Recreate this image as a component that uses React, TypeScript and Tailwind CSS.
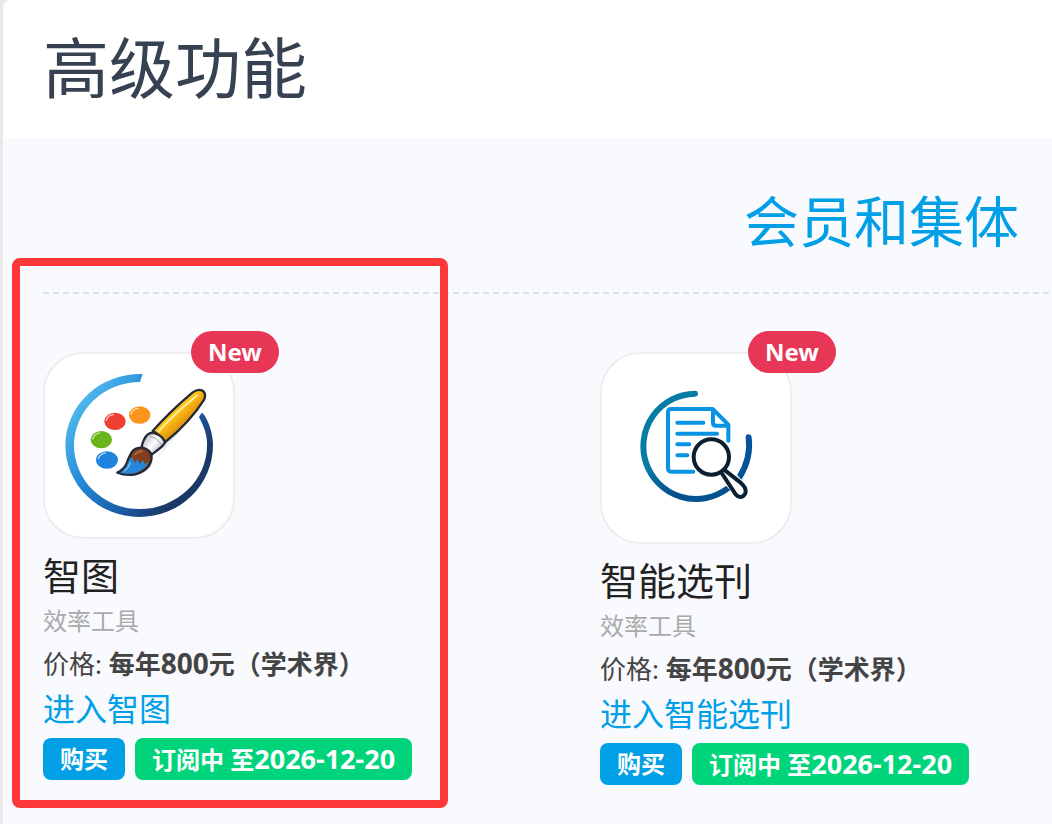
import React from "react";

type Feature = {
    name: string;
    category: string;
    price: number;
    audience: string;
    enter: string;
    expires: string;
    icon: React.ReactNode;
    marked?: boolean;
};

const PaletteIcon: React.FC = () => (
    <svg viewBox="45 102 564 549" className="block w-full" aria-hidden="true">
        <defs>
            <linearGradient id="ring" x1="190" y1="210" x2="500" y2="440" gradientUnits="userSpaceOnUse">
                <stop offset="0" stopColor="#4bb3ea"/>
                <stop offset="0.35" stopColor="#2489d8"/>
                <stop offset="0.75" stopColor="#1b5aa5"/>
                <stop offset="1" stopColor="#1b3968"/>
            </linearGradient>
            <linearGradient id="handle" x1="415" y1="260" x2="460" y2="305" gradientUnits="userSpaceOnUse">
                <stop offset="0" stopColor="#ffd21c"/>
                <stop offset="0.5" stopColor="#fcc015"/>
                <stop offset="1" stopColor="#e49a0c"/>
            </linearGradient>
            <linearGradient id="ferrule" x1="350" y1="355" x2="395" y2="390" gradientUnits="userSpaceOnUse">
                <stop offset="0" stopColor="#c9ccd2"/>
                <stop offset="0.45" stopColor="#ffffff"/>
                <stop offset="1" stopColor="#b4b8c0"/>
            </linearGradient>
        </defs>
        <path
            fill="url(#ring)"
            d="M338 162A224 215 0 0 0 106 376A222 215 0 0 0 328 591A221 215 0 0 0 549 376C549 345 538 306 521 283L515 278L507 291C522 320 532 345 531 376A203 191 0 0 1 328 567A196 191 0 0 1 132 376A198 191 0 0 1 330 186Z"
        />
        <ellipse cx="255" cy="304" rx="32" ry="26" fill="#ee3f32"/>
        <ellipse cx="329" cy="285" rx="32" ry="26" fill="#fb951c"/>
        <ellipse cx="214" cy="359" rx="32" ry="26" fill="#6bb51c"/>
        <ellipse cx="231" cy="420" rx="33" ry="26" fill="#1d84de"/>
        <g fill="none" stroke="#fff" strokeWidth="3.5" strokeLinecap="round" opacity="0.8">
            <path d="M229 301Q233 286 250 284"/>
            <path d="M303 282Q307 267 324 265"/>
            <path d="M188 357Q192 341 209 339"/>
            <path d="M205 416Q209 402 226 399"/>
        </g>
        <path d="M366 438L406 374L500 272L412 380L350 450Z" fill="#dfe1ec" opacity="0.6"/>
        <g stroke="#252a38" strokeWidth="7" strokeLinejoin="round">
            <path d="M368 333Q420 274 488 217Q503 206 516 211Q530 218 523 238Q480 306 406 366Q390 344 368 333Z" fill="url(#handle)"/>
            <path d="M351 345Q364 333 380 342Q400 351 405 368Q398 380 387 387L365 404Q356 390 335 381Q338 361 351 345Z" fill="url(#ferrule)"/>
            <path d="M303 400Q313 382 335 383Q356 386 364 404Q367 421 357 437Q342 456 316 463Q288 468 262 458Q282 448 289 432Q295 415 303 400Z" fill="#81401b"/>
        </g>
        <path d="M299 416L308 412L314 428L324 418L329 432L340 420L344 432L356 427Q345 449 316 459Q291 464 270 458Q287 448 292 433Z" fill="#2487dc"/>
        <path d="M283 453Q296 444 301 428" fill="none" stroke="#79c1f3" strokeWidth="4" strokeLinecap="round"/>
        <path d="M386 334Q434 280 502 226" fill="none" stroke="#ffef9e" strokeWidth="6" strokeLinecap="round"/>
        <path d="M315 404Q322 393 336 394" fill="none" stroke="#b06a3c" strokeWidth="5" strokeLinecap="round"/>
        <path d="M359 349Q381 353 394 374" fill="none" stroke="#a6aab4" strokeWidth="3"/>
    </svg>
);

const JournalIcon: React.FC = () => (
    <svg viewBox="36 102 564 564" className="block w-full" fill="none" strokeLinecap="round" strokeLinejoin="round" aria-hidden="true">
        <defs>
            <linearGradient id="orbit" x1="250" y1="410" x2="290" y2="500" gradientUnits="userSpaceOnUse">
                <stop offset="0" stopColor="#047ca4"/>
                <stop offset="1" stopColor="#03528f"/>
            </linearGradient>
        </defs>
        <path d="M315 221A158 158 0 1 0 412 506" stroke="url(#orbit)" strokeWidth="18"/>
        <path d="M476 352Q484 415 448 472" stroke="#05539a" strokeWidth="18"/>
        <path d="M415 470L466 527" stroke="#fff" strokeWidth="46" strokeLinecap="butt"/>
        <g stroke="#0893e3" strokeWidth="12">
            <path d="M415 362V314L368 267H244Q234 267 234 277V445Q234 455 244 455H310"/>
            <path d="M369 270V308Q369 317 378 317H412"/>
            <path d="M262 308H340M262 341H381M262 373H298M262 406H292"/>
        </g>
        <circle cx="364" cy="411" r="53" fill="#fff" stroke="#0a2030" strokeWidth="12"/>
        <path d="M395 459L437 523Q448 536 460 528Q471 519 465 504Q460 495 452 488L406 452" fill="#fff" stroke="#0a2030" strokeWidth="12"/>
    </svg>
);

const features: Feature[] = [
    {
        name: "智图",
        category: "效率工具",
        price: 800,
        audience: "学术界",
        enter: "进入智图",
        expires: "2026-12-20",
        icon: <PaletteIcon/>,
        marked: true,
    },
    {
        name: "智能选刊",
        category: "效率工具",
        price: 800,
        audience: "学术界",
        enter: "进入智能选刊",
        expires: "2026-12-20",
        icon: <JournalIcon/>,
    },
];

const FeatureCard: React.FC<{ feature: Feature }> = ({feature}) => (
    <article className="relative">
        {feature.marked && (
            <div className="pointer-events-none absolute -top-[94px] -bottom-7 -left-[31px] w-[436px] rounded-lg border-8 border-[#fc3838]"></div>
        )}
        <div className="relative w-48">
            <div className="overflow-hidden rounded-[40px] border-2 border-[#eeeeee] bg-white">{feature.icon}</div>
            <span className="absolute -top-[21px] left-[148px] rounded-full bg-[#e83656] px-[17px] text-2xl leading-[42px] font-bold text-white">
                New
            </span>
        </div>
        <h3 className="mt-3 text-[38px] leading-[48px] text-[#222222]">{feature.name}</h3>
        <p className="text-2xl leading-[44px] text-[#aaaaaa]">{feature.category}</p>
        <p className="text-[26px] leading-[40px] whitespace-nowrap text-[#444444]">
            价格: <strong>每年<span className="text-[28px]">{feature.price}</span>元（{feature.audience}）</strong>
        </p>
        <a href="#" className="block text-[32px] leading-[50px] text-[#009fe6]">{feature.enter}</a>
        <div className="mt-1 flex gap-[10px] text-2xl leading-[42px] font-bold whitespace-nowrap text-white">
            <button type="button" className="rounded-lg bg-[#009fe6] px-[17px]">购买</button>
            <span className="h-[42px] rounded-lg bg-[#00d47b] px-[17px]">订阅中 至<span className="text-[27px]">{feature.expires}</span></span>
        </div>
    </article>
);

const App: React.FC = () => {
    return (
        <div className="min-h-screen overflow-x-hidden bg-[#e9e9e9] pl-[3px] font-['Noto_Sans','Noto_Sans_CJK_SC',sans-serif]">
            <main className="min-h-screen rounded-tl-lg bg-[#f9fafe]">
                <header className="rounded-tl-lg bg-white px-10 pt-7 pb-8">
                    <h1 className="text-[66px] leading-[78px] text-[#364152]">高级功能</h1>
                </header>
                <section className="pr-[3px] pl-10">
                    <nav className="flex justify-end border-b-2 border-dashed border-[#d9e2ef] pt-[42px] pr-[30px] pb-[30px]">
                        <a href="#" className="text-[55px] leading-[82px] text-[#009fe6]">会员和集体</a>
                    </nav>
                    <div className="grid grid-cols-2 items-start gap-x-27 pt-[58px]">
                        {features.map((feature) => (
                            <FeatureCard key={feature.name} feature={feature}/>
                        ))}
                    </div>
                </section>
            </main>
        </div>
    );
};

export default App;
